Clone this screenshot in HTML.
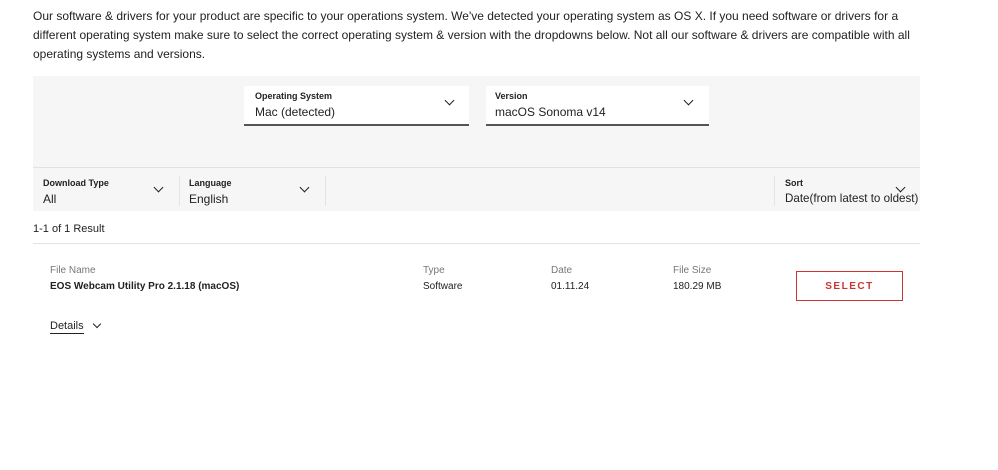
<!DOCTYPE html>
<html><head><style>
body{margin:0;width:998px;height:470px;background:#fff;font-family:"Liberation Sans",sans-serif;color:#222;position:relative;overflow:hidden}
.a{position:absolute}
p{margin:0}
.lbl{font-size:9px;font-weight:bold;color:#222}
.val{font-size:12px;color:#222}
.chev{position:absolute;width:6px;height:6px;border-right:1.6px solid #222;border-bottom:1.6px solid #222;transform:rotate(45deg)}
.sm{font-size:10px;color:#777}
.v2{font-size:10px;color:#222}
</style></head><body>
<div class="a" style="left:33px;top:7px;width:880px;font-size:12px;line-height:19px;color:#222">Our software &amp; drivers for your product are specific to your operations system. We've detected your operating system as OS X. If you need software or drivers for a different operating system make sure to select the correct operating system &amp; version with the dropdowns below. Not all our software &amp; drivers are compatible with all operating systems and versions.</div>
<div class="a" style="left:33px;top:76px;width:887px;height:135px;background:#f6f6f6"></div>
<div class="a" style="left:33px;top:167px;width:887px;height:1px;background:#e2e2e2"></div>
<div class="a" style="left:244px;top:86px;width:225px;height:38px;background:#fff;border-bottom:2px solid #555"></div>
<div class="a lbl" style="left:255px;top:91px">Operating System</div>
<div class="a val" style="left:255px;top:105px">Mac (detected)</div>
<div class="chev" style="left:446px;top:97px"></div>
<div class="a" style="left:486px;top:86px;width:223px;height:38px;background:#fff;border-bottom:2px solid #555"></div>
<div class="a lbl" style="left:495px;top:91px">Version</div>
<div class="a val" style="left:495px;top:105px">macOS Sonoma v14</div>
<div class="chev" style="left:685px;top:97px"></div>
<div class="a" style="left:179px;top:176px;width:1px;height:30px;background:#e4e4e4"></div>
<div class="a" style="left:325px;top:176px;width:1px;height:30px;background:#e4e4e4"></div>
<div class="a" style="left:774px;top:176px;width:1px;height:30px;background:#e4e4e4"></div>
<div class="a lbl" style="left:43px;top:178px">Download Type</div>
<div class="a val" style="left:43px;top:192px">All</div>
<div class="chev" style="left:155px;top:184px"></div>
<div class="a lbl" style="left:189px;top:178px">Language</div>
<div class="a val" style="left:189px;top:192px">English</div>
<div class="chev" style="left:301px;top:184px"></div>
<div class="a lbl" style="left:785px;top:178px">Sort</div>
<div class="a val" style="left:785px;top:192px;font-size:11.6px">Date(from latest to oldest)</div>
<div class="chev" style="left:897px;top:184px"></div>
<div class="a" style="left:33px;top:223px;font-size:11px">1-1 of 1 Result</div>
<div class="a" style="left:33px;top:243px;width:887px;height:1px;background:#e2e2e2"></div>
<div class="a sm" style="left:50px;top:265px">File Name</div>
<div class="a v2" style="left:50px;top:281px;font-weight:bold">EOS Webcam Utility Pro 2.1.18 (macOS)</div>
<div class="a sm" style="left:423px;top:265px">Type</div>
<div class="a v2" style="left:423px;top:281px">Software</div>
<div class="a sm" style="left:551px;top:265px">Date</div>
<div class="a v2" style="left:551px;top:281px">01.11.24</div>
<div class="a sm" style="left:673px;top:265px">File Size</div>
<div class="a v2" style="left:673px;top:281px">180.29 MB</div>
<div class="a" style="left:796px;top:271px;width:105px;height:28px;border:1px solid #cc3333;color:#cc3333;font-size:10px;font-weight:bold;letter-spacing:1.5px;text-align:center;line-height:29px">SELECT</div>
<div class="a" style="left:50px;top:320px;font-size:11px;border-bottom:1px solid #222;line-height:13px">Details</div>
<div class="chev" style="left:94px;top:321px;width:5px;height:5px"></div>
</body></html>
